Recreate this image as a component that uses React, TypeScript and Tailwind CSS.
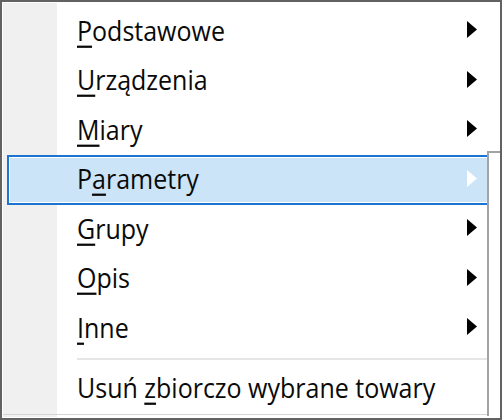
import type { ReactNode } from 'react'

// context menu entries: access key letter is underlined
const items = [
  { pre: '', key: 'P', post: 'odstawowe' },
  { pre: '', key: 'U', post: 'rządzenia' },
  { pre: '', key: 'M', post: 'iary' },
  { pre: 'P', key: 'a', post: 'rametry', active: true },
  { pre: '', key: 'G', post: 'rupy' },
  { pre: '', key: 'O', post: 'pis' },
  { pre: '', key: 'I', post: 'nne' },
]

function Label({ pre, k, post }: { pre: string; k: string; post: string }) {
  return (
    <span className="inline-block origin-center scale-y-[1.12] text-[25px] leading-none whitespace-pre">
      {pre}
      <span className="underline decoration-2 underline-offset-[4px]">{k}</span>
      {post}
    </span>
  )
}

function Row({
  children,
  active,
  tall,
  submenu = true,
}: {
  children: ReactNode
  active?: boolean
  tall?: boolean
  submenu?: boolean
}) {
  const base = `mx-[4px] flex shrink-0 items-center border-2 pr-[16px] pl-[68px] ${tall ? 'h-[50px]' : 'h-[49px]'}`
  return (
    <div
      className={
        active
          ? `${base} border-[#1a74d2] bg-[#cce4f7] shadow-[inset_0_0_0_1px_#ffffff]`
          : `${base} border-transparent`
      }
    >
      <div className="flex-1">{children}</div>
      {submenu && (
        <svg width="10" height="17" viewBox="0 0 10 17" className="-translate-y-[2px]">
          <path d="M0 0 L10 8.5 L0 17 Z" fill={active ? '#ffffff' : '#000000'} />
        </svg>
      )}
    </div>
  )
}

export default function App() {
  return (
    <div className="relative h-[420px] w-[502px] overflow-hidden border-2 border-[#626262] bg-[#f0f0f0] font-['Open_Sans',sans-serif] text-[#0a0a0a]">
      <div className="flex h-full flex-col border border-white bg-[linear-gradient(to_right,#f0f0f0_54px,#ffffff_54px)] pt-[4px]">
        {items.map((item, i) => (
          <Row key={item.key + item.post} active={item.active} tall={i % 2 === 1}>
            <Label pre={item.pre} k={item.key} post={item.post} />
          </Row>
        ))}

        {/* separator */}
        <div className="h-[11px] shrink-0 pt-[5px] pl-[74px]">
          <div className="h-[2px] bg-[#e6e6e6]" />
        </div>

        <Row submenu={false}>
          <span className="inline-block origin-center scale-y-[1.12] text-[25px] leading-none whitespace-pre">
            Usuń <span className="underline decoration-2 underline-offset-[4px]">z</span>biorczo wybrane towary
          </span>
        </Row>

        <div className="mt-auto h-[3px] border-t border-[#d4d4d4]" />
      </div>

      {/* edge of the window lying over the menu */}
      <div className="absolute top-[149px] right-0 bottom-[2px] left-[485px] border-t-2 border-l-2 border-[#a3a3a3] bg-white" />
    </div>
  )
}
